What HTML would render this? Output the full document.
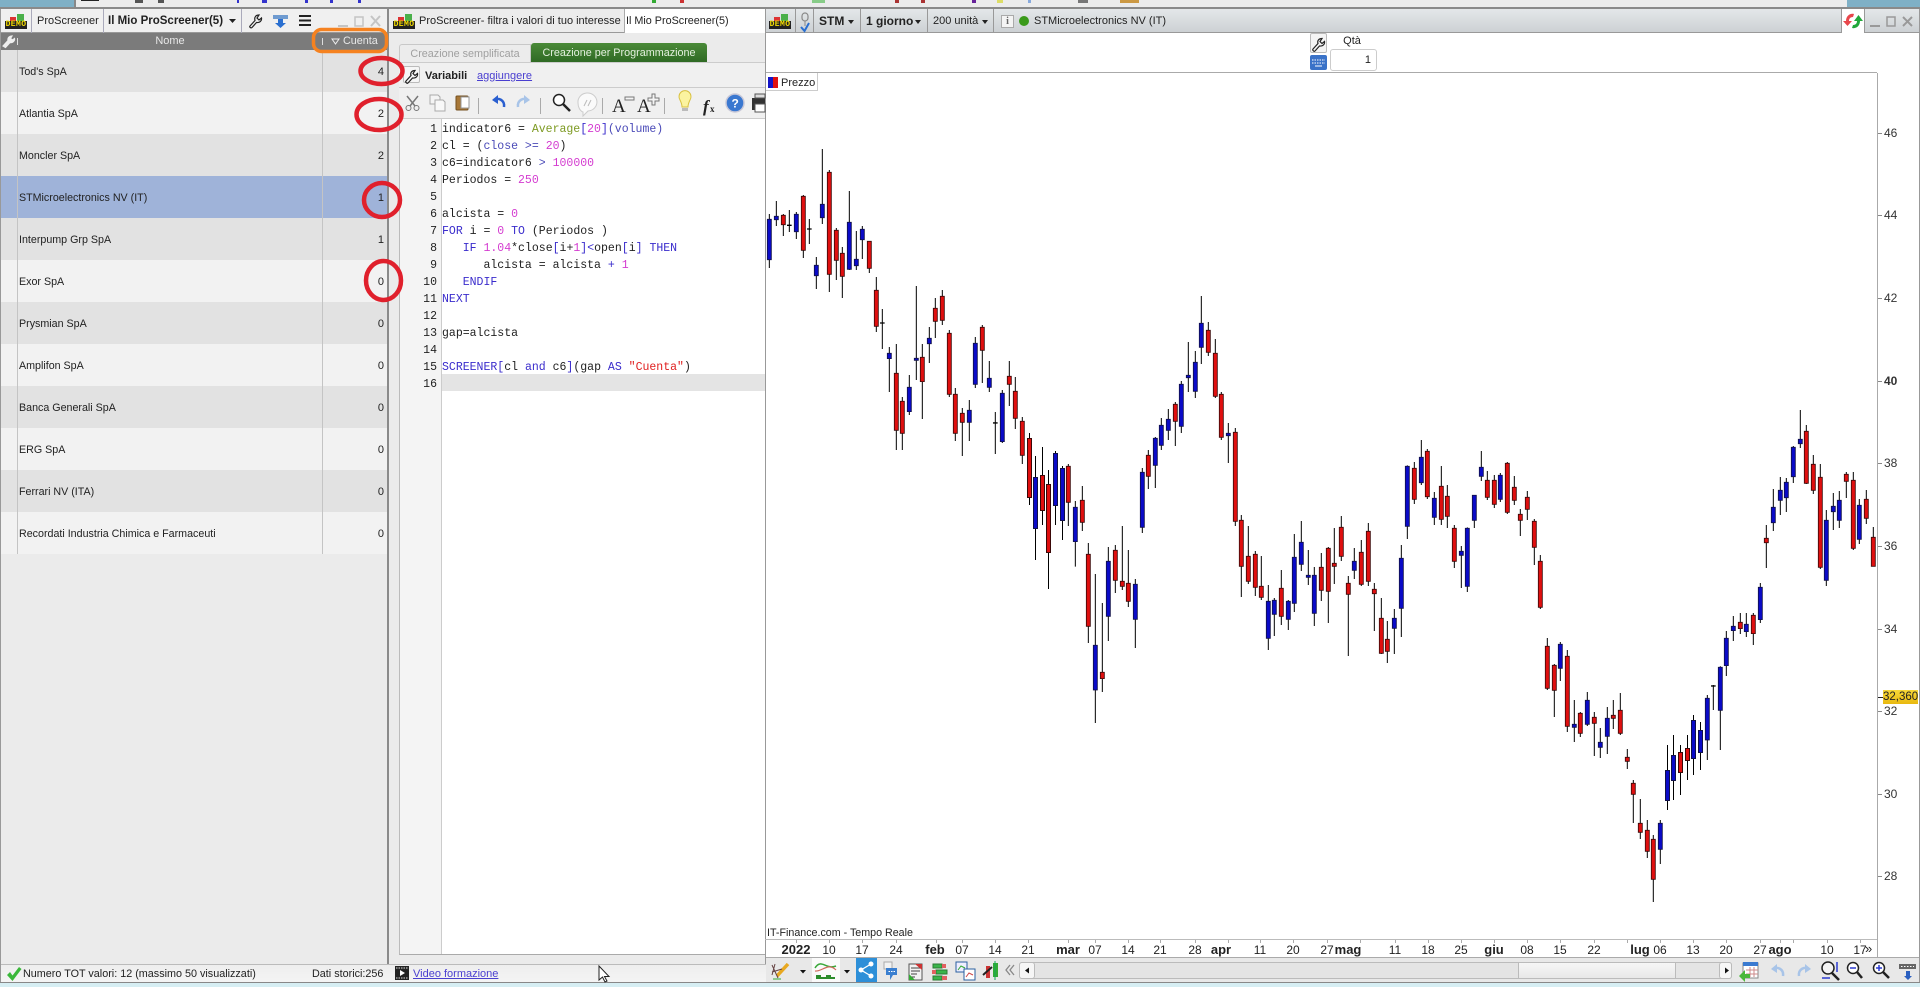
<!DOCTYPE html>
<html><head><meta charset="utf-8"><title>ProScreener</title>
<style>
html,body{margin:0;padding:0;width:1920px;height:987px;overflow:hidden;background:#d6eef3}
body{position:relative;font:11px "Liberation Sans",sans-serif;color:#222}
.a{position:absolute;white-space:nowrap}
.hd{position:absolute;top:9px;height:24px;background:linear-gradient(#eef0f1,#dcdfe1);border-bottom:1px solid #999;box-sizing:border-box}
.sep{position:absolute;width:1px;background:#aab}
.t{position:absolute;white-space:nowrap;line-height:14px;font-size:11px}
.demo{position:absolute;width:22px;height:15px}
.demo i{position:absolute;left:0;top:7px;width:22px;height:8px;background:#222;color:#f5dc00;font:bold 8px/8px "Liberation Mono",monospace;text-align:center;letter-spacing:.4px;font-style:normal}
.demo b{position:absolute;display:block}
.demo .r{left:5px;top:3px;width:6px;height:4px;background:#d33}
.demo .g{left:12px;top:0;width:7px;height:7px;background:#4ab04a}
.row{position:absolute;left:1px;width:386px;height:42px}
.row span{position:absolute;left:18px;top:15px;line-height:14px;font-size:10.7px;white-space:nowrap;color:#222}
.row em{position:absolute;right:3px;top:15px;line-height:14px;font-size:11px;font-style:normal;color:#222}
.code{position:absolute;left:442px;top:120.5px;font:11.53px/17.03px "Liberation Mono",monospace;color:#222;white-space:pre}
.nums{position:absolute;left:399px;width:38px;top:120.5px;font:11.53px/17.03px "Liberation Mono",monospace;color:#222;text-align:right;white-space:pre}
.k{color:#3a2ccc}.m{color:#d43cd0}.f{color:#7d9a22}.v{color:#4a4ab8}.s{color:#e02020}
.d{position:absolute;top:943px;font-size:12px;line-height:14px;transform:translateX(-50%);color:#222;white-space:nowrap}
.d.b{font-weight:bold;font-size:13px}
.y{position:absolute;left:1884px;font-size:12px;line-height:14px;color:#333}
.tp{position:absolute;top:0;height:3px}
</style></head><body>

<!-- top strip -->
<div class="a" style="left:0;top:0;width:1920px;height:7px;background:#ececec"></div>
<div class="a" style="left:0;top:0;width:74px;height:7px;background:#7fb0c6"></div>
<div class="a" style="left:1847px;top:0;width:73px;height:7px;background:#7fb0c6"></div>
<div class="a" style="left:0;top:7px;width:1920px;height:2px;background:#8a8a8a"></div>
<div class="a" style="left:74px;top:0;width:2px;height:8px;background:#888"></div>
<div class="tp" style="left:81px;width:18px;height:1px;background:#222"></div>
<div class="tp" style="left:135px;width:8px;background:#555"></div>
<div class="tp" style="left:158px;width:6px;background:#555"></div>
<div class="tp" style="left:237px;width:2px;background:#33c"></div>
<div class="tp" style="left:262px;width:5px;background:#33c"></div>
<div class="tp" style="left:305px;width:3px;background:#33c"></div>
<div class="tp" style="left:330px;width:3px;background:#33c"></div>
<div class="tp" style="left:358px;width:3px;background:#33c"></div>
<div class="tp" style="left:652px;width:4px;background:#3a3"></div>
<div class="tp" style="left:680px;width:4px;background:#c33"></div>
<div class="tp" style="left:812px;width:13px;background:#8c8"></div>
<div class="tp" style="left:895px;width:4px;background:#a33"></div>
<div class="tp" style="left:921px;width:4px;background:#a33"></div>
<div class="tp" style="left:972px;width:4px;background:#629"></div>
<div class="tp" style="left:997px;width:6px;background:#dd6"></div>
<div class="tp" style="left:1028px;width:3px;background:#8ad"></div>
<div class="tp" style="left:1078px;width:10px;background:#777"></div>
<div class="tp" style="left:1120px;width:19px;background:#c94"></div>

<!-- LEFT PANEL -->
<div class="a" style="left:0;top:9px;width:388px;height:973px;background:#ebebeb"></div>
<div class="hd" style="left:0;width:388px;background:#f0f0f0"></div>
<div class="demo" style="left:5px;top:14px"><b class="r"></b><b class="g"></b><i>DEMO</i></div>
<div class="sep" style="left:31px;top:9px;height:24px"></div>
<div class="t" style="left:37px;top:14px">ProScreener</div>
<div class="sep" style="left:103px;top:9px;height:24px"></div>
<div class="t" style="left:108px;top:14px;font-weight:bold;font-size:11.5px">Il Mio ProScreener(5)</div>
<div class="sep" style="left:241px;top:9px;height:24px"></div>

<div class="a" style="left:1px;top:33px;width:386px;height:17px;background:#7b7b7b"></div>
<div class="a" style="left:128px;top:34px;width:84px;text-align:center;color:#e8e8e8;line-height:15px;font-size:11px">Nome</div>
<div class="a" style="left:343px;top:34px;color:#e8e8e8;line-height:15px;font-size:10.8px">Cuenta</div>

<div class="row" style="top:50px;background:#e2e2e2"><span>Tod's SpA</span><em>4</em></div>
<div class="row" style="top:92px;background:#f2f2f2"><span>Atlantia SpA</span><em>2</em></div>
<div class="row" style="top:134px;background:#e2e2e2"><span>Moncler SpA</span><em>2</em></div>
<div class="row" style="top:176px;background:#9fb3d9"><span>STMicroelectronics NV (IT)</span><em>1</em></div>
<div class="row" style="top:218px;background:#e2e2e2"><span>Interpump Grp SpA</span><em>1</em></div>
<div class="row" style="top:260px;background:#f2f2f2"><span>Exor SpA</span><em>0</em></div>
<div class="row" style="top:302px;background:#e2e2e2"><span>Prysmian SpA</span><em>0</em></div>
<div class="row" style="top:344px;background:#f2f2f2"><span>Amplifon SpA</span><em>0</em></div>
<div class="row" style="top:386px;background:#e2e2e2"><span>Banca Generali SpA</span><em>0</em></div>
<div class="row" style="top:428px;background:#f2f2f2"><span>ERG SpA</span><em>0</em></div>
<div class="row" style="top:470px;background:#e2e2e2"><span>Ferrari NV (ITA)</span><em>0</em></div>
<div class="row" style="top:512px;background:#f2f2f2"><span>Recordati Industria Chimica e Farmaceuti</span><em>0</em></div>
<div class="a" style="left:17px;top:50px;width:1px;height:504px;background:#c4c4c4"></div>
<div class="a" style="left:322px;top:50px;width:1px;height:504px;background:#c4c4c4"></div>
<div class="a" style="left:387px;top:9px;width:2px;height:973px;background:#8a8a8a"></div>
<div class="a" style="left:0;top:9px;width:1px;height:973px;background:#999"></div>

<!-- status bar -->
<div class="a" style="left:1px;top:964px;width:1918px;height:18px;background:linear-gradient(#eee,#f4f4f4);border-top:1px solid #bbb;box-sizing:border-box"></div>
<div class="a" style="left:0;top:982px;width:1920px;height:1px;background:#888"></div>
<div class="t" style="left:23px;top:967px;font-size:10.8px">Numero TOT valori: 12 (massimo 50 visualizzati)</div>
<div class="t" style="left:312px;top:967px;font-size:10.8px">Dati storici:256</div>
<div class="t" style="left:413px;top:967px;font-size:11px;color:#4a3fd0;text-decoration:underline">Video formazione</div>

<!-- MIDDLE PANEL -->
<div class="a" style="left:389px;top:9px;width:376px;height:955px;background:#ebebeb"></div>
<div class="hd" style="left:389px;width:376px;background:#ececec"></div>
<div class="demo" style="left:393px;top:14px"><b class="r"></b><b class="g"></b><i>DEMO</i></div>
<div class="t" style="left:419px;top:14px">ProScreener- filtra i valori di tuo interesse</div>
<div class="a" style="left:624px;top:9px;width:141px;height:24px;background:#fff;border-left:1px solid #aaa;box-sizing:border-box"></div>
<div class="t" style="left:626px;top:14px;font-size:10.8px">Il Mio ProScreener(5)</div>

<div class="a" style="left:399px;top:44px;width:132px;height:18px;background:#ececec;border:1px solid #c8c8c8;border-bottom:0;box-sizing:border-box;border-radius:3px 0 0 0;color:#a0a0a0;text-align:center;line-height:19px;font-size:10.8px">Creazione semplificata</div>
<div class="a" style="left:531px;top:43px;width:176px;height:19px;background:linear-gradient(#4a8a38,#2f6a24);border-radius:3px 3px 0 0;color:#e4f0df;text-align:center;line-height:21px;font-size:10.8px">Creazione per Programmazione</div>
<div class="a" style="left:399px;top:62px;width:366px;height:56px;background:#f0f0f0;border-top:1px solid #ccc;box-sizing:border-box"></div>
<div class="a" style="left:399px;top:87px;width:366px;height:1px;background:#ccc"></div>
<div class="a" style="left:403px;top:66px;width:17px;height:17px;background:#f6f6f6;border:1px solid #bbb;border-radius:2px;box-sizing:border-box"></div>
<div class="t" style="left:425px;top:69px;font-weight:bold;font-size:11px">Variabili</div>
<div class="t" style="left:477px;top:69px;font-size:11px;color:#4a3fd0;text-decoration:underline">aggiungere</div>

<div class="a" style="left:399px;top:118px;width:366px;height:837px;background:#fff;border-left:1px solid #bbb;border-bottom:1px solid #aaa;border-top:1px solid #ccc;box-sizing:border-box"></div>
<div class="a" style="left:400px;top:119px;width:41px;height:835px;background:#f4f4f4;border-right:1px solid #ccc;box-sizing:content-box"></div>
<div class="a" style="left:442px;top:374px;width:323px;height:17px;background:#e4e4e4"></div>
<div class="nums">1
2
3
4
5
6
7
8
9
10
11
12
13
14
15
16</div>
<div class="code">indicator6 = <span class="f">Average</span><span class="k">[</span><span class="m">20</span><span class="k">]</span><span class="v">(volume)</span>
cl = (<span class="v">close &gt;=</span> <span class="m">20</span>)
c6=indicator6 <span class="v">&gt;</span> <span class="m">100000</span>
Periodos = <span class="m">250</span>

alcista = <span class="m">0</span>
<span class="k">FOR</span> i = <span class="m">0</span> <span class="k">TO</span> (Periodos )
   <span class="k">IF</span> <span class="m">1.04</span>*close<span class="k">[</span>i+<span class="m">1</span><span class="k">]&lt;</span>open<span class="k">[</span>i<span class="k">]</span> <span class="k">THEN</span>
      alcista = alcista <span class="k">+</span> <span class="m">1</span>
   <span class="k">ENDIF</span>
<span class="k">NEXT</span>

gap=alcista

<span class="k">SCREENER</span><span class="k">[</span>cl <span class="k">and</span> c6<span class="k">]</span>(gap <span class="k">AS</span> <span class="s">"Cuenta"</span>)
</div>

<!-- CHART PANEL -->
<div class="a" style="left:765px;top:9px;width:1155px;height:948px;background:#fff"></div>
<div class="hd" style="left:765px;width:1155px;background:linear-gradient(#e4e7e9,#cdd1d4)"></div>
<div class="a" style="left:1841px;top:9px;width:24px;height:24px;background:#fff;border-left:1px solid #999;border-right:1px solid #999;box-sizing:border-box"></div>
<div class="demo" style="left:769px;top:14px"><b class="r"></b><b class="g"></b><i>DEMO</i></div>
<div class="sep" style="left:795px;top:9px;height:24px;background:#999"></div>
<div class="sep" style="left:813px;top:9px;height:24px;background:#999"></div>
<div class="t" style="left:819px;top:14px;font-weight:bold;font-size:12px">STM</div>
<div class="sep" style="left:860px;top:9px;height:24px;background:#999"></div>
<div class="t" style="left:866px;top:14px;font-weight:bold;font-size:12px">1 giorno</div>
<div class="sep" style="left:927px;top:9px;height:24px;background:#999"></div>
<div class="t" style="left:933px;top:14px;font-size:11px">200 unità</div>
<div class="sep" style="left:993px;top:9px;height:24px;background:#999"></div>
<div class="a" style="left:1001px;top:15px;width:13px;height:13px;background:#f4f4f4;border:1px solid #aaa;box-sizing:border-box;text-align:center;font:bold 10px/11px 'Liberation Serif',serif;color:#666">i</div>
<div class="a" style="left:1019px;top:16px;width:10px;height:10px;border-radius:50%;background:#3a9a1a"></div>
<div class="t" style="left:1034px;top:14px;font-size:11px">STMicroelectronics NV (IT)</div>

<div class="a" style="left:1352px;top:34px;transform:translateX(-50%);font-size:11px;line-height:14px">Qtà</div>
<div class="a" style="left:1330px;top:49px;width:47px;height:22px;background:#fff;border:1px solid #ccc;border-radius:3px;box-sizing:border-box;text-align:right;padding-right:5px;line-height:20px;font-size:11px">1</div>
<div class="a" style="left:1310px;top:33px;width:17px;height:20px;background:#f4f4f4;border:1px solid #bbb;box-sizing:border-box;border-radius:2px"></div>
<div class="a" style="left:765px;top:72px;width:1112px;height:1px;background:#aaa"></div>
<div class="a" style="left:1877px;top:73px;width:1px;height:884px;background:#aaa"></div>
<div class="a" style="left:1919px;top:9px;width:1px;height:973px;background:#999"></div>
<div class="a" style="left:765px;top:9px;width:1px;height:955px;background:#999"></div>

<div class="a" style="left:766px;top:73px;width:52px;height:18px;background:#fff;border-right:1px solid #ccc;border-bottom:1px solid #ccc;box-sizing:border-box"></div>
<div class="a" style="left:768px;top:77px;width:5px;height:11px;background:#1414c8"></div>
<div class="a" style="left:773px;top:77px;width:5px;height:11px;background:#e01010"></div>
<div class="t" style="left:781px;top:76px;font-size:11px">Prezzo</div>

<div class="y" style="top:126px">46</div><div class="y" style="top:208px">44</div><div class="y" style="top:291px">42</div><div class="y" style="top:374px;font-weight:bold">40</div><div class="y" style="top:456px">38</div><div class="y" style="top:539px">36</div><div class="y" style="top:622px">34</div><div class="y" style="top:704px">32</div><div class="y" style="top:787px">30</div><div class="y" style="top:869px">28</div>
<div class="a" style="left:1883px;top:690px;width:35px;height:14px;background:linear-gradient(#f8d838,#e8b810);font-size:11.5px;line-height:14px;text-align:center;color:#222">32,360</div>

<div class="t" style="left:767px;top:926px;font-size:10.7px">IT-Finance.com - Tempo Reale</div>
<div class="a" style="left:765px;top:939px;width:1112px;height:1px;background:#bbb"></div>

<div class="d b" style="left:796px">2022</div><div class="d" style="left:829px">10</div><div class="d" style="left:862px">17</div><div class="d" style="left:896px">24</div><div class="d b" style="left:935px">feb</div><div class="d" style="left:962px">07</div><div class="d" style="left:995px">14</div><div class="d" style="left:1028px">21</div><div class="d b" style="left:1068px">mar</div><div class="d" style="left:1095px">07</div><div class="d" style="left:1128px">14</div><div class="d" style="left:1160px">21</div><div class="d" style="left:1195px">28</div><div class="d b" style="left:1221px">apr</div><div class="d" style="left:1260px">11</div><div class="d" style="left:1293px">20</div><div class="d" style="left:1327px">27</div><div class="d b" style="left:1348px">mag</div><div class="d" style="left:1395px">11</div><div class="d" style="left:1428px">18</div><div class="d" style="left:1461px">25</div><div class="d b" style="left:1494px">giu</div><div class="d" style="left:1527px">08</div><div class="d" style="left:1560px">15</div><div class="d" style="left:1594px">22</div><div class="d b" style="left:1640px">lug</div><div class="d" style="left:1660px">06</div><div class="d" style="left:1693px">13</div><div class="d" style="left:1726px">20</div><div class="d" style="left:1760px">27</div><div class="d b" style="left:1780px">ago</div><div class="d" style="left:1827px">10</div><div class="d" style="left:1860px">17</div><div class="d" style="left:1865px;transform:none;font-size:13px;line-height:12px">»</div>

<!-- bottom toolbar -->
<div class="a" style="left:766px;top:957px;width:1153px;height:25px;background:#e8e8e8;border-top:1px solid #aaa;box-sizing:border-box"></div>
<div class="a" style="left:812px;top:958px;width:28px;height:24px;background:#fafafa"></div>
<div class="a" style="left:856px;top:958px;width:21px;height:24px;background:#2d8fd8"></div>
<div class="a" style="left:1019px;top:962px;width:713px;height:17px;background:#e4e4e4;border:1px solid #bbb;box-sizing:border-box;border-radius:3px"></div>
<div class="a" style="left:1019px;top:962px;width:16px;height:17px;background:#f6f6f6;border:1px solid #bbb;box-sizing:border-box;border-radius:3px"></div>
<div class="a" style="left:1518px;top:962px;width:158px;height:17px;background:linear-gradient(#f6f6f6,#e8e8e8);border:1px solid #bbb;box-sizing:border-box"></div>
<div class="a" style="left:1719px;top:962px;width:13px;height:17px;background:#f6f6f6;border:1px solid #bbb;box-sizing:border-box;border-radius:3px"></div>

<!-- overlay svg: chart + icons + annotations -->
<svg class="a" style="left:0;top:0" width="1920" height="987" viewBox="0 0 1920 987" fill="none">
<!-- price ticks -->
<path stroke="#888" d="M1878 133.500H1882M1878 215.500H1882M1878 298.500H1882M1878 381.500H1882M1878 463.500H1882M1878 546.500H1882M1878 629.500H1882M1878 711.500H1882M1878 794.500H1882M1878 876.500H1882"/>
<path stroke="#222" d="M1878 697.500H1883"/>
<path stroke="#aaa" d="M796.500 940V943M829.500 940V943M862.500 940V943M896.500 940V943M936.500 940V943M962.500 940V943M995.500 940V943M1028.500 940V943M1068.500 940V943M1095.500 940V943M1128.500 940V943M1160.500 940V943M1195.500 940V943M1228.500 940V943M1260.500 940V943M1293.500 940V943M1327.500 940V943M1360.500 940V943M1395.500 940V943M1428.500 940V943M1461.500 940V943M1494.500 940V943M1527.500 940V943M1560.500 940V943M1594.500 940V943M1627.500 940V943M1660.500 940V943M1693.500 940V943M1726.500 940V943M1760.500 940V943M1780.500 940V943M1793.500 940V943M1827.500 940V943M1860.500 940V943"/>

<!-- Candles, zone 1 -->
<g transform="translate(765 140) scale(.3333)">
<path stroke="#000" stroke-width="3" d="M13 222V384M34 183V258M55 222V288M73 210V276M94 216V297M115 165V354M133 237V312M154 351V447M172 27V252M193 90V456M214 264V420M232 321V474M253 153V390M274 273V390M292 258V357M313 303V399M334 411V576M352 507V627M373 621V756M394 612V930M412 771V930M433 705V825M454 438V720M472 612V837M493 561V669M511 474V594M532 450V555M553 570V771M571 744V903M592 804V948M613 780V903M631 591V744M652 555V729M673 663V756M691 816V942M712 750V909M733 663V798M751 711V867M772 831V972"/>
<path stroke="#000" stroke-width="4" d="M66 256H80M126 267H140M345 549H359M684 849H698"/>
<path stroke="#101048" stroke-width="2.500" fill="#0a0ac8" d="M7 238H19V359H7zM28 229H40V239H28zM88 223H100V275H88zM148 376H160V407H148zM166 193H178V233H166zM247 247H259V388H247zM268 358H280V377H268zM286 268H298V299H286zM367 640H379V656H367zM427 742H439V815H427zM448 655H460V661H448zM487 595H499V611H487zM607 811H619V847H607zM625 610H637V733H625zM667 715H679V742H667zM706 760H718V905H706z"/>
<path stroke="#3a0808" stroke-width="2.500" fill="#e00f0f" d="M49 226H61V254H49zM109 169H121V331H109zM187 97H199V403H187zM208 271H220V361H208zM226 340H238V409H226zM307 304H319V385H307zM328 451H340V559H328zM388 700H400V871H388zM406 784H418V880H406zM466 652H478V725H466zM505 505H517V544H505zM526 469H538V541H526zM547 580H559V763H547zM565 763H577V880H565zM586 820H598V847H586zM646 562H658V631H646zM727 709H739V733H727zM745 754H757V835H745zM766 844H778V946H766z"/>
</g>
<!-- gap candles -->
<path stroke="#000" d="M1029.500 433V505M1035.500 456V560M1042.500 447V525M1048.500 470V589M1055.500 451V525M1062.500 466V540"/>
<path stroke="#101048" fill="#0a0ac8" d="M1033.500 477.500H1037.500V528.500H1033.500zM1053.500 453.500H1057.500V505.500H1053.500zM1060.500 468.500H1064.500V520.500H1060.500z"/>
<path stroke="#3a0808" fill="#e00f0f" d="M1027.500 438.500H1031.500V497.500H1027.500zM1040.500 475.500H1044.500V510.500H1040.500zM1046.500 484.500H1050.500V552.500H1046.500z"/>

<!-- zone 2 -->
<g transform="translate(1065 280) scale(.3333)">
<path stroke="#000" stroke-width="3" d="M10 552V738M31 663V860M52 618V753M70 789V1089M91 882V1329M112 969V1236M130 801V1083M151 795V939M172 738V930M190 810V981M211 897V1104M232 564V759M250 510V627M271 471V624M289 414V510M310 387V480M331 366V498M349 303V459M370 186V336M391 213V354M409 48V252M430 126V228M451 177V354M469 336V480M490 429V549M511 444V738M529 705V951M550 738V912M571 813V948M589 828V960M610 915V1110M628 954V1068M649 870V1035M670 960V1050M688 762V996M709 723V873M730 810V915M748 861V1038M769 819V963M790 801V1029M808 744V912M829 708V843M850 888V1128M868 804V897M889 780V918"/>
<path stroke="#101048" stroke-width="2.500" fill="#0a0ac8" d="M25 682H37V785H25zM85 1096H97V1230H85zM124 844H136V1009H124zM205 913H217V1018H205zM226 577H238V742H226zM265 475H277V556H265zM283 436H295V496H283zM304 418H316V451H304zM343 313H355V439H343zM364 286H376V293H364zM385 247H397V334H385zM403 130H415V202H403zM484 460H496V467H484zM604 964H616V1075H604zM622 961H634V1003H622zM664 964H676V1018H664zM682 832H694V970H682zM703 787H715V853H703zM724 886H736V892H724zM742 886H754V1000H742zM862 844H874V871H862z"/>
<path stroke="#3a0808" stroke-width="2.500" fill="#e00f0f" d="M4 559H16V667H4zM46 661H58V727H46zM64 823H76V1039H64zM106 1177H118V1196H106zM145 811H157V901H145zM166 904H178V919H166zM184 910H196V964H184zM244 526H256V589H244zM325 373H337V424H325zM424 151H436V217H424zM445 220H457V349H445zM463 343H475V472H463zM505 457H517V724H505zM523 721H535V859H523zM544 829H556V904H544zM565 823H577V922H565zM583 919H595V952H583zM643 925H655V1009H643zM763 862H775V931H763zM784 805H796V934H784zM802 850H814V859H802zM823 742H835V829H823zM844 910H856V943H844zM883 817H895V913H883z"/>
</g>

<!-- zone 3 -->
<g transform="translate(1365 400) scale(.3333)">
<path stroke="#000" stroke-width="3" d="M10 369V558M28 549V693M49 594V762M67 663V789M88 627V762M109 435V711M127 196V417M148 186V312M169 120V255M187 147V297M208 276V375M229 198V375M247 255V384M268 375V504M289 438V564M307 382V576M328 285V384M349 153V243M367 213V300M388 225V324M406 219V306M427 186V342M448 228V315M466 327V408M487 273V360M508 357V495M526 465V627M547 714V870M568 792V951M586 726V843M607 750V996M628 900V1026M646 936V1011M667 876V978M688 936V1068M706 984V1074M727 921V1062M745 900V987M766 879V1005M787 1047V1107M805 1140V1269M826 1197V1317M847 1260V1374M865 1305V1506M886 1260V1392"/>
<path stroke="#101048" stroke-width="2.500" fill="#0a0ac8" d="M82 655H94V685H82zM103 475H115V625H103zM121 199H133V379H121zM163 172H175V248H163zM202 295H214V352H202zM283 454H295V466H283zM301 385H313V559H301zM322 286H334V361H322zM343 202H355V229H343zM400 226H412V298H400zM580 733H592V805H580zM622 973H634V982H622zM661 901H673V973H661zM700 1027H712V1042H700zM721 955H733V1009H721zM880 1270H892V1348H880z"/>
<path stroke="#3a0808" stroke-width="2.500" fill="#e00f0f" d="M4 394H16V544H4zM22 568H34V581H22zM43 655H55V760H43zM61 718H73V754H61zM142 205H154V298H142zM181 154H193V290H181zM223 259H235V358H223zM241 289H253V349H241zM262 385H274V484H262zM361 241H373V292H361zM382 241H394V313H382zM421 190H433V337H421zM442 262H454V301H442zM460 343H472V361H460zM481 292H493V328H481zM502 364H514V442H502zM520 484H532V622H520zM541 739H553V865H541zM562 796H574V871H562zM601 769H613V979H601zM640 940H652V1000H640zM682 952H694V970H682zM739 946H751V955H739zM760 931H772V1000H760zM781 1072H793V1084H781zM799 1150H811V1183H799zM820 1270H832V1297H820zM841 1291H853V1354H841zM859 1318H871V1438H859z"/>
</g>

<!-- gap candles zone 3b -->
<path stroke="#000" d="M1667.500 745V810M1673.500 735V800M1680.500 745V795M1687.500 735V780M1693.500 715V775M1700.500 722V770"/>
<path stroke="#101048" fill="#0a0ac8" d="M1665.500 770.500H1669.500V800.500H1665.500zM1671.500 755.500H1675.500V780.500H1671.500zM1691.500 720.500H1695.500V758.500H1691.500zM1698.500 730.500H1702.500V752.500H1698.500z"/>
<path stroke="#3a0808" fill="#e00f0f" d="M1678.500 752.500H1682.500V772.500H1678.500zM1685.500 748.500H1689.500V760.500H1685.500z"/>

<!-- zone 4 -->
<g transform="translate(1620 390) scale(.3333)">
<path stroke="#000" stroke-width="3" d="M262 915V1110M280 885V960M301 829V1080M319 723V858M340 678V753M361 669V732M379 669V741M400 669V765M421 579V699M439 405V534M460 297V423M481 261V375M499 264V366M520 168V279M541 60V174M559 105V282M580 195V312M601 222V537M619 360V588M640 309V420M658 303V414M679 246V324M700 246V480M718 327V462M739 300V402M760 411V529"/>
<path stroke="#000" stroke-width="4" d="M273 888H287"/>
<path stroke="#101048" stroke-width="2.500" fill="#0a0ac8" d="M256 925H268V1050H256zM295 832H307V961H295zM313 745H325V827H313zM334 709H346V722H334zM373 703H385V725H373zM415 592H427V689H415zM454 352H466V398H454zM475 301H487V331H475zM493 277H505V323H493zM514 172H526V260H514zM535 148H547V161H535zM613 391H625V571H613zM634 349H646V365H634zM652 331H664V391H652zM712 346H724V448H712z"/>
<path stroke="#3a0808" stroke-width="2.500" fill="#e00f0f" d="M355 697H367V716H355zM394 676H406V731H394zM433 445H445V458H433zM553 124H565V280H553zM574 223H586V301H574zM595 262H607V532H595zM673 253H685V274H673zM694 271H706V475H694zM733 328H745V385H733zM754 442H766V529H754z"/>
</g>

<!-- header icons left panel -->
<path d="M229 19H236L232.500 23Z" fill="#222"/>
<path stroke="#222" stroke-width="1.200" d="M250 26L255 20.500C254 17 256 15 259 15L257 18L259 20L261.500 18C262 21 259.500 23 256.500 22.500L252 27.500C251 28.500 249 27 250 26Z"/>
<path fill="#6f9bd0" d="M273 15H288V19H273z"/><path fill="#2a6fd0" d="M278 19H283V23H286L280.500 28L275 23H278z"/>
<path stroke="#222" stroke-width="2" d="M299 16H311M299 20.500H311M299 25H311"/>
<path stroke="#c4c4c4" stroke-width="2" d="M338 26H348"/><path stroke="#c4c4c4" stroke-width="1.500" d="M355 17H363V26H355z"/><path stroke="#c4c4c4" stroke-width="2" d="M371 16L380 26M380 16L371 26"/>
<!-- col header -->
<path stroke="#eee" stroke-width="1.200" d="M3 46L8 40.500C7.500 37.500 9.500 36 12 36L10.500 38.500L12.500 40L14.500 38.500C15 41 12.500 43 10 42.500L5.500 47.500z" fill="#eee"/>
<path stroke="#ddd" d="M17.500 38V45M322.500 38V45"/>
<path stroke="#eee" d="M332 39H339L335.500 44Z"/>

<!-- ORANGE + RED annotations -->
<rect x="313.500" y="29.500" width="73" height="22" rx="8" stroke="#f58220" stroke-width="3.500"/>
<g stroke="#e0202c" stroke-width="4.500">
<ellipse cx="381.500" cy="71" rx="21" ry="13"/>
<ellipse cx="379" cy="114.500" rx="22.500" ry="15.500"/>
<ellipse cx="382" cy="200" rx="18" ry="17"/>
<ellipse cx="383.500" cy="280.500" rx="17.500" ry="19.500"/>
</g>

<!-- Variabili wrench -->
<path stroke="#222" stroke-width="1.200" d="M406 81L411 75.500C410 72.500 412 70.500 415 70.500L413 73.500L415 75.500L417.500 73.500C418 76.500 415.500 78.500 412.500 78L408 83C407 84 405 82 406 81Z"/>
<!-- editor toolbar -->
<g stroke="#777">
<path d="M407 96L415 106M418 96L410 106" stroke-width="1.500"/><circle cx="408.500" cy="108" r="2.500"/><circle cx="416.500" cy="108" r="2.500"/>
<path d="M430 95H438L440 97V104H430z" stroke="#aaa" fill="#f4f4f4"/><path d="M435 100H443L445 102V111H435z" stroke="#aaa" fill="#f8f8f8"/>
<rect x="456" y="96" width="12" height="14" rx="1" fill="#a87838" stroke="#74501f"/><path d="M461 97H469V108H461z" fill="#fff" stroke="#999"/>
<path stroke="#aaa" d="M478.500 98V114M540.500 98V114M602.500 98V114M664.500 98V114"/>
</g>
<path d="M504 107C505 100 498 97 494 100" stroke="#2a5fd0" stroke-width="2.500"/><path d="M498 95L492 100L498 104Z" fill="#2a5fd0"/>
<path d="M518 107C517 100 524 97 528 100" stroke="#a8c4e8" stroke-width="2.500"/><path d="M524 95L530 100L524 104Z" fill="#a8c4e8"/>
<circle cx="559" cy="100" r="5.500" stroke="#222" stroke-width="1.500" fill="#fff"/><path d="M563 104L570 111" stroke="#222" stroke-width="2.500"/>
<path d="M578 103A9.500 9 0 1 1 588 111L583 116V112C580 111 578 107 578 103Z" stroke="#ccc" fill="#fafafa"/><path d="M584 106L587 100M588 106L591 100" stroke="#bbb"/>
<text x="612" y="112" font-family="Liberation Serif" font-size="19" fill="#222">A</text><path fill="#f4f4f4" stroke="#777" d="M625 97H634V100H625z"/>
<text x="637" y="112" font-family="Liberation Serif" font-size="19" fill="#222">A</text><path fill="#f4f4f4" stroke="#777" d="M652 94H655V98H659V101H655V105H652V101H648V98H652z"/>
<path d="M680 100A6 6 0 1 1 690 100C688.500 103 688 105 688 107H682C682 105 681.500 103 680 100Z" fill="#fbf3a0" stroke="#d8c040"/><path d="M682 108H688V111H682z" fill="#bbb"/>
<text x="703" y="112" font-family="Liberation Serif" font-style="italic" font-weight="bold" font-size="17" fill="#222">f</text><text x="710" y="112" font-family="Liberation Serif" font-weight="bold" font-size="9" fill="#222">x</text>
<circle cx="735" cy="103" r="9" fill="#3a78d0" stroke="#c8c8d8" stroke-width="1.500"/><text x="731.500" y="107.500" font-family="Liberation Sans" font-weight="bold" font-size="12" fill="#fff">?</text>
<path d="M752 98H765V110H752z" fill="#333"/><path d="M755 94H765V98H755z" fill="#ddd" stroke="#555"/><path d="M755 104H765V112H755z" fill="#fff" stroke="#555"/>

<!-- chart header icons -->
<path d="M848 20H854L851 24Z M915 20H921L918 24Z M982 20H988L985 24Z" fill="#222"/>
<rect x="802" y="13" width="6" height="8" rx="3" stroke="#888" stroke-width="1.200"/><path stroke="#888" d="M805 21V26"/><path stroke="#2a6fd0" stroke-width="2" d="M801 27L804.500 31L809 23"/>
<path d="M1846 21C1846 16 1850 13 1854 14L1853 17C1850 17 1849 19 1849 21H1852L1847.500 26L1843 21Z" fill="#e8474c"/>
<path d="M1860 21C1860 26 1856 29 1852 28L1853 25C1856 25 1857 23 1857 21H1854L1858.500 15L1863 21Z" fill="#22a83a"/>
<path stroke="#999" stroke-width="2" d="M1870 26H1880"/><path stroke="#999" stroke-width="1.500" d="M1887 17H1895V26H1887z"/><path stroke="#999" stroke-width="2" d="M1903 17L1912 26M1912 17L1903 26"/>
<path stroke="#222" stroke-width="1.200" d="M1313 49L1318 43.500C1317 40.500 1319 38.500 1322 38.500L1320 41.500L1322 43.500L1324.500 41.500C1325 44.500 1322.500 46.500 1319.500 46L1315 51C1314 52 1312 50 1313 49Z"/>
<rect x="1310" y="55" width="17" height="15" rx="2" fill="#3a72c8"/><path stroke="#fff" stroke-dasharray="1.500 1" d="M1312 60H1325M1312 63H1325"/><path stroke="#fff" d="M1315 66H1322"/>

<!-- bottom toolbar icons -->
<path d="M777 976L788 964" stroke="#e8a820" stroke-width="3.500"/><path d="M772 965L778 978M775 964L772 975M772 972L782 969" stroke="#644"/><path d="M773 979H781" stroke="#3a3"/>
<path d="M800 970H806L803 973.500Z M844 970H850L847 973.500Z" fill="#111"/>
<path d="M815 968C821 958 826 970 836 966" stroke="#3aa83a" stroke-width="1.500"/><path d="M815 971C822 972 828 962 836 970" stroke="#d0685a" stroke-width="1.200"/><path d="M816 979V975H821V977H826V975H831V977H835V979z" fill="#2c8c2c"/>
<circle cx="861" cy="970" r="2.500" fill="#fff"/><circle cx="871" cy="964" r="2.500" fill="#fff"/><circle cx="871" cy="976" r="2.500" fill="#fff"/><path stroke="#fff" stroke-width="1.300" d="M871 964L861 970L871 976"/>
<path d="M884 962H892V969H884z" fill="#f2f2f2" stroke="#aaa"/><path d="M886 968H897V975H893L890 980V975H886z" fill="#3a7fd0"/><path d="M888.500 971.500H890M891 971.500H892.500M893.500 971.500H895" stroke="#fff"/>
<path d="M909 964H922V980H909z" fill="#f2f2f2" stroke="#555"/><path d="M911 968H920M911 971H920M911 974H917M911 977H915" stroke="#444"/><path d="M915 964H922V970z" fill="#c33"/><path d="M909 980V974L915 980z" fill="#3a3"/>
<path fill="#3ab44a" stroke="#2a7a33" d="M933 964H942V968H933zM936 970H947V974H936zM933 976H942V980H933z"/><path fill="#e06060" d="M942 964H946V968H942zM932 970H936V974H932zM942 976H947V980H942z"/>
<rect x="956" y="962" width="11" height="10" fill="#eef" stroke="#2a5fa0"/><rect x="964" y="969" width="11" height="11" fill="#fff" stroke="#2a5fa0"/><path stroke="#c44" d="M966 977L969 973L973 975"/><path stroke="#3a3" d="M958 970L961 966L965 968"/>
<path d="M986 966H990V978H986z" fill="#c33"/><path d="M993 963H998V977H993z" fill="#3a3"/><path d="M995 961V980" stroke="#1a5"/><path d="M983 975L992 967" stroke="#222" stroke-width="2"/>
<path stroke="#888" stroke-width="1.300" d="M1010 965L1006 970L1010 975M1014 965L1010 970L1014 975"/>
<path d="M1029 967.500V973.500L1025 970.500Z M1725 967.500V973.500L1729 970.500Z" fill="#111"/>
<rect x="1743" y="963" width="15" height="15" fill="#fff" stroke="#888"/><rect x="1743" y="962" width="15" height="4" fill="#3a7ad0"/><path d="M1750 967V977M1754 967V977M1746 970H1758M1746 974H1758" stroke="#c88"/><path d="M1750 974H1745V970L1739 976L1745 982V978H1750z" fill="#4ab83a"/>
<path d="M1783 976C1784 969 1777 966 1773 969" stroke="#a8c4e8" stroke-width="2.500"/><path d="M1777 964L1771 969L1777 973Z" fill="#a8c4e8"/>
<path d="M1799 976C1798 969 1805 966 1809 969" stroke="#a8c4e8" stroke-width="2.500"/><path d="M1805 964L1811 969L1805 973Z" fill="#a8c4e8"/>
<circle cx="1828" cy="968" r="6" stroke="#222" stroke-width="1.500" fill="#f4f4f4"/><path d="M1832 973L1839 980" stroke="#222" stroke-width="2.500"/><path d="M1837 962V972M1822 978H1830" stroke="#2a3ad0" stroke-width="1.500"/>
<circle cx="1853" cy="968" r="5.500" stroke="#222" stroke-width="1.500" fill="#fff"/><path d="M1857 972L1862 978" stroke="#222" stroke-width="2.500"/><path d="M1850 968H1856" stroke="#2a3ad0" stroke-width="1.500"/>
<circle cx="1879" cy="968" r="5.500" stroke="#222" stroke-width="1.500" fill="#fff"/><path d="M1883 972L1889 978" stroke="#222" stroke-width="2.500"/><path d="M1876 968H1882M1879 965V971" stroke="#2a3ad0" stroke-width="1.500"/>
<rect x="1899" y="964" width="17" height="5" fill="#666"/><path d="M1901 966.500H1914" stroke="#fff" stroke-dasharray="1.500 1.500"/><path d="M1906 971H1910V976H1912L1908 980L1904 976H1906z" fill="#2a5fc0"/>

<!-- status icons -->
<path d="M7 975L10 972L12.500 975.500L19 967L21.500 969L12.500 981z" fill="#3ab83a"/>
<rect x="395" y="966" width="14" height="14" fill="#222"/><path d="M396 968H408M396 978H408" stroke="#ddd" stroke-dasharray="1.500 1"/><path d="M400 970V976L405 973z" fill="#fff"/>
<path d="M599 966V980L602.500 977L605 982L607 981L604.500 976.500H609z" fill="#fff" stroke="#222"/>
</svg>
</body></html>
